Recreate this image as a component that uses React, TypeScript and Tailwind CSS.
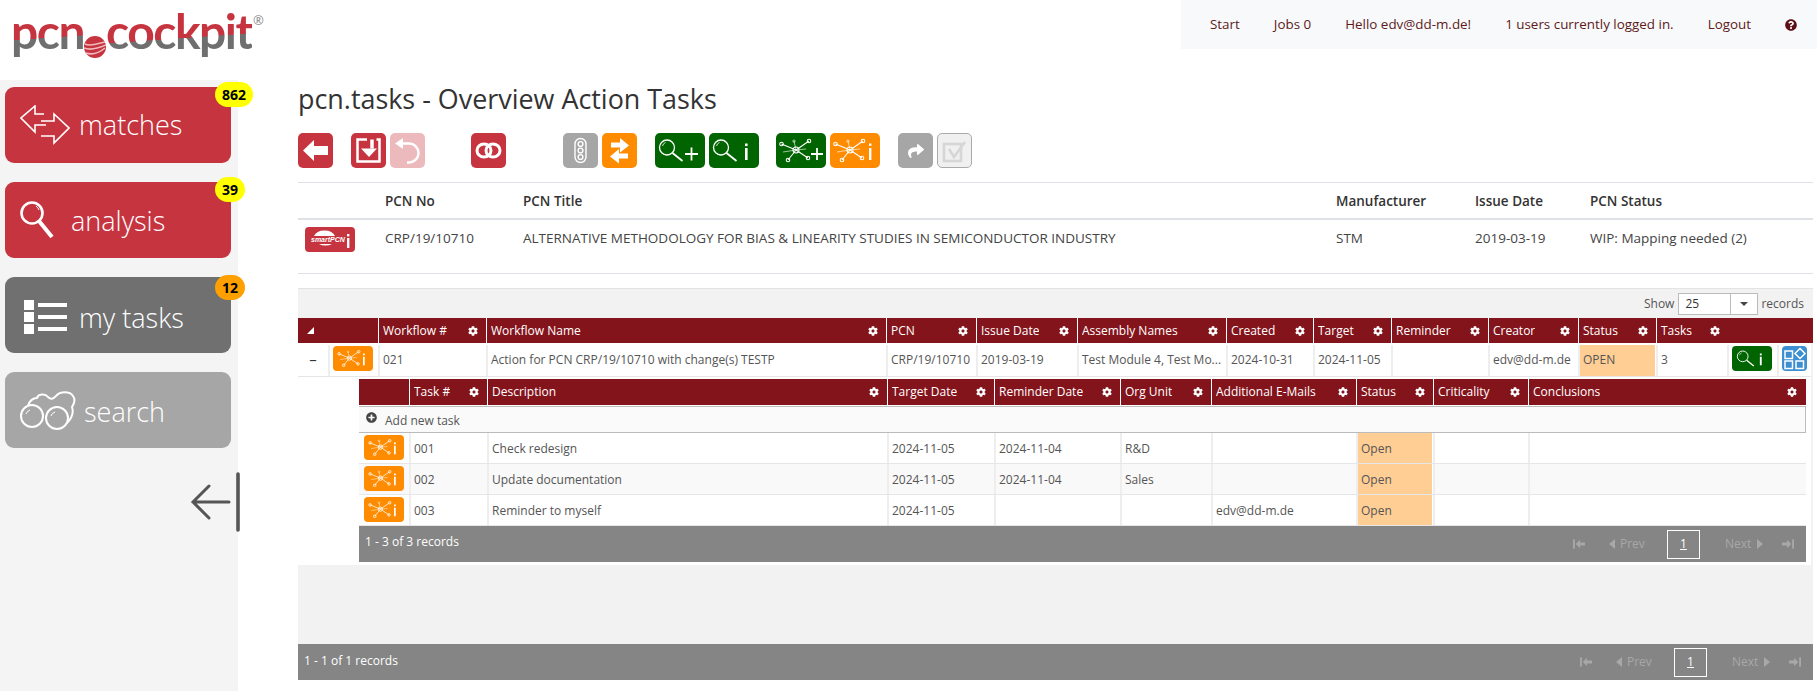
import type { ReactNode } from "react";
import { FaCog, FaPlusCircle, FaQuestionCircle, FaShare } from "react-icons/fa";

function Gear() {
  return <FaCog className="ml-auto shrink-0 text-white" size={10} />;
}

function HubIcon({ mark }: { mark: "i" | "+" }) {
  const nodes = [
    [5.5, 11],
    [33, 8],
    [12, 27],
    [32, 25],
  ];
  return (
    <svg viewBox="0 0 50 35" className="h-full w-full" fill="none" stroke="#fff">
      <g strokeWidth="1.05">
        <line x1="20" y1="17" x2="5.5" y2="11" />
        <line x1="20" y1="17" x2="33" y2="8" />
        <line x1="20" y1="17" x2="12" y2="27" />
        <line x1="20" y1="17" x2="32" y2="25" />
        <line x1="20" y1="17" x2="18" y2="8" strokeOpacity=".6" />
        <line x1="20" y1="17" x2="7" y2="19" strokeOpacity=".6" />
        <line x1="20" y1="17" x2="30" y2="16" strokeOpacity=".6" />
        <circle cx="20" cy="17" r="3" fill="none" />
        {nodes.map(([x, y]) => (
          <circle key={x} cx={x} cy={y} r="1.8" />
        ))}
        <circle cx="18" cy="8" r="1.1" strokeOpacity=".6" />
      </g>
      {mark === "+" ? (
        <path d="M35 21h12M41 15v12" strokeWidth="1.8" />
      ) : (
        <>
          <rect x="39" y="15" width="2.4" height="12" fill="#fff" stroke="none" />
          <rect x="39" y="10.5" width="2.4" height="2.4" fill="#fff" stroke="none" />
        </>
      )}
    </svg>
  );
}

function LensIcon({ mark }: { mark: "i" | "+" }) {
  return (
    <svg viewBox="0 0 50 35" className="h-full w-full" fill="none" stroke="#fff">
      <circle cx="12" cy="14.5" r="7.5" strokeWidth="1.3" />
      <path d="M17.5 20l10 8" strokeWidth="1.8" />
      <path d="M7.5 13a5 5 0 0 1 3-3.5" strokeWidth="0.8" />
      {mark === "+" ? (
        <path d="M30 21h13M36.5 14.5v13" strokeWidth="1.8" />
      ) : (
        <>
          <rect x="36" y="15" width="2.6" height="12" fill="#fff" stroke="none" />
          <rect x="36" y="10.5" width="2.6" height="2.6" fill="#fff" stroke="none" />
        </>
      )}
    </svg>
  );
}

function ToolButton({
  children,
  className,
}: {
  children: ReactNode;
  className: string;
}) {
  return (
    <div
      className={`flex h-[35px] shrink-0 items-center justify-center rounded-[5px] ${className}`}
    >
      {children}
    </div>
  );
}

function Toolbar() {
  return (
    <div className="flex h-[35px]">
      <ToolButton className="w-[35px] bg-[#c6343f]">
        <svg viewBox="0 0 35 35" className="h-full w-full" fill="#fff">
          <path d="M5 17.5L16 7v6h14v9H16v6z" />
        </svg>
      </ToolButton>
      <ToolButton className="ml-[18px] w-[35px] bg-[#c6343f]">
        <svg viewBox="0 0 35 35" className="h-full w-full" fill="none" stroke="#fff">
          <path d="M16 6.5H6.5v22h22v-22h-3" strokeWidth="2.5" />
          <path d="M21 6.5v9" strokeWidth="3.5" />
          <path d="M13 14.5h16l-8 8.5z" transform="translate(-3 1) scale(1 1)" fill="#fff" stroke="none" />
        </svg>
      </ToolButton>
      <ToolButton className="ml-[4px] w-[35px] bg-[#ecb9bd]">
        <svg viewBox="0 0 35 35" className="h-full w-full" fill="none" stroke="#fff">
          <path d="M10 10.5h9a9.5 9.5 0 0 1 0 19h-2" strokeWidth="2.4" />
          <path d="M5 10.5l8-5.5v11z" fill="#fff" stroke="none" />
        </svg>
      </ToolButton>
      <ToolButton className="ml-[46px] w-[35px] bg-[#c6343f]">
        <svg viewBox="0 0 35 35" className="h-full w-full" fill="none" stroke="#fff" strokeWidth="3">
          <ellipse cx="13" cy="17.5" rx="7" ry="6.5" />
          <ellipse cx="22" cy="17.5" rx="7" ry="6.5" />
        </svg>
      </ToolButton>
      <ToolButton className="ml-[57px] w-[35px] bg-[#a6a6a6]">
        <svg viewBox="0 0 35 35" className="h-full w-full" fill="none" stroke="#fff" strokeWidth="1.4">
          <rect x="12" y="5.5" width="11" height="24" rx="5.5" />
          <circle cx="17.5" cy="11" r="2.4" />
          <circle cx="17.5" cy="17.5" r="2.4" />
          <circle cx="17.5" cy="24" r="2.4" />
        </svg>
      </ToolButton>
      <ToolButton className="ml-[4px] w-[35px] bg-[#ff8c00]">
        <svg viewBox="0 0 35 35" className="h-full w-full" fill="#fff">
          <path d="M9 10.5h9V6l9 7.5-9 7v-5H9z" transform="translate(0 -1)" />
          <path d="M26 19.5h-9V15l-9 7.5 9 7v-5h9z" transform="translate(0 1)" />
        </svg>
      </ToolButton>
      <ToolButton className="ml-[18px] w-[50px] bg-[#006400]">
        <LensIcon mark="+" />
      </ToolButton>
      <ToolButton className="ml-[4px] w-[50px] bg-[#006400]">
        <LensIcon mark="i" />
      </ToolButton>
      <ToolButton className="ml-[17px] w-[50px] bg-[#006400]">
        <HubIcon mark="+" />
      </ToolButton>
      <ToolButton className="ml-[4px] w-[50px] bg-[#ff8c00]">
        <HubIcon mark="i" />
      </ToolButton>
      <ToolButton className="ml-[18px] w-[35px] bg-[#a6a6a6]">
        <FaShare size={16} className="text-white" />
      </ToolButton>
      <ToolButton className="ml-[4px] w-[35px] border border-[#aaaaaa] bg-[#f0f0f0]">
        <svg viewBox="0 0 33 33" className="h-full w-full" fill="none" stroke="#d6d6d6" strokeWidth="2.6">
          <rect x="6" y="10" width="17" height="17" />
          <path d="M11 15l5 8 11-15" />
        </svg>
      </ToolButton>
    </div>
  );
}

function SmartPcnButton() {
  return (
    <div className="flex h-[25px] w-[50px] items-center rounded-[4px] bg-[#c6343f]">
      <svg viewBox="0 0 50 25" className="h-full w-full">
        <path d="M9 9a11 8 0 0 1 21 0z" fill="#fff" />
        <path d="M14 17a9 5 0 0 0 13 0z" fill="#fff" />
        <text x="6" y="15" fill="#fff" fontSize="7" fontWeight="700" fontStyle="italic" fontFamily="'Liberation Sans', sans-serif">
          smartPCN
        </text>
        <rect x="42" y="11" width="2.4" height="10" fill="#fff" />
        <rect x="42" y="7" width="2.4" height="2.4" fill="#fff" />
      </svg>
    </div>
  );
}

function PcnSummary() {
  return (
    <div className="mt-[14px] border-b border-t border-[#dee2e6] text-[13.5px] text-[#444]">
      <div className="grid h-[37px] grid-cols-[87px_138px_813px_139px_115px_1fr] items-center border-b-2 border-[#dee2e6] pt-[2px] font-semibold text-[#333]">
        <span />
        <span>PCN No</span>
        <span>PCN Title</span>
        <span>Manufacturer</span>
        <span>Issue Date</span>
        <span>PCN Status</span>
      </div>
      <div className="grid h-[53px] grid-cols-[87px_138px_813px_139px_115px_1fr] items-start pt-[7px]">
        <div className="pl-[7px]">
          <SmartPcnButton />
        </div>
        <span className="pt-[1px]">CRP/19/10710</span>
        <span className="pt-[1px]">ALTERNATIVE METHODOLOGY FOR BIAS &amp; LINEARITY STUDIES IN SEMICONDUCTOR INDUSTRY</span>
        <span className="pt-[1px]">STM</span>
        <span className="pt-[1px]">2019-03-19</span>
        <span className="pt-[1px]">WIP: Mapping needed (2)</span>
      </div>
    </div>
  );
}

const outerHeads = [
  "Workflow #",
  "Workflow Name",
  "PCN",
  "Issue Date",
  "Assembly Names",
  "Created",
  "Target",
  "Reminder",
  "Creator",
  "Status",
  "Tasks",
];

const innerHeads = [
  "Task #",
  "Description",
  "Target Date",
  "Reminder Date",
  "Org Unit",
  "Additional E-Mails",
  "Status",
  "Criticality",
  "Conclusions",
];

const tasks = [
  ["001", "Check redesign", "2024-11-05", "2024-11-04", "R&D", ""],
  ["002", "Update documentation", "2024-11-05", "2024-11-04", "Sales", ""],
  ["003", "Reminder to myself", "2024-11-05", "", "", "edv@dd-m.de"],
];

function PagerGlyph({ dir }: { dir: "first" | "last" }) {
  return (
    <svg viewBox="0 0 13 12" className={`h-[12px] w-[12px] ${dir === "last" ? "rotate-180" : ""}`} fill="#a8a8a8">
      <rect x="0" y="1" width="2" height="10" />
      <path d="M3 6l4.5-4.5v3H13v3H7.5v3z" />
    </svg>
  );
}

function Pager({ label, inner }: { label: string; inner?: boolean }) {
  return (
    <div className="flex h-[36px] items-center bg-[#858585] pl-[6px] pr-[12px] text-[12px]">
      <span className={`text-white ${inner ? "pb-[5px]" : "pb-[2px]"}`}>{label}</span>
      <div className="ml-auto flex items-center text-[#a8a8a8]">
        <PagerGlyph dir="first" />
        <span className="ml-[24px] h-0 w-0 border-y-[5px] border-r-[6px] border-y-transparent border-r-[#a8a8a8]" />
        <span className="ml-[5px] w-[27px]">Prev</span>
        <span className="ml-[20px] flex h-[29px] w-[33px] items-center justify-center border border-white text-white underline">
          1
        </span>
        <span className="ml-[25px] w-[27px]">Next</span>
        <span className="ml-[5px] h-0 w-0 border-y-[5px] border-l-[6px] border-y-transparent border-l-[#a8a8a8]" />
        <span className="ml-[19px]">
          <PagerGlyph dir="last" />
        </span>
      </div>
    </div>
  );
}

function TasksTable() {
  const cols = "grid grid-cols-[50px_78px_400px_107px_126px_91px_145px_77px_95px_277px]";
  return (
    <div className="ml-[61px] mr-[5px] pt-[2px]">
      <div className={`${cols} h-[26px] items-center bg-[#84141c] text-[12px] text-white`}>
        <span />
        {innerHeads.map((h) => (
          <div key={h} className="flex h-full items-center border-l border-white pl-[4px] pr-[8px]">
            <span className="truncate">{h}</span>
            <Gear />
          </div>
        ))}
      </div>
      <div className="mt-[1px] flex h-[27px] items-center border-x border-y border-[#bbbbbb] border-l-0 bg-[#fafafa] pl-[7px] text-[12px] text-[#555]">
        <FaPlusCircle size={11} className="mb-[4px] text-[#444]" />
        <span className="ml-[8px] pt-[2px]">Add new task</span>
      </div>
      {tasks.map((t, i) => (
        <div
          key={t[0]}
          className={`${cols} h-[31px] border-b border-[#e6e6e6] text-[12px] text-[#555] ${
            i === 1 ? "bg-[#f9f9f9]" : "bg-white"
          }`}
        >
          <div className="pl-[5px] pt-[2px]">
            <div className="h-[25px] w-[40px] rounded-[4px] bg-[#ff8c00]">
              <HubIcon mark="i" />
            </div>
          </div>
          {[t[0], t[1], t[2], t[3], t[4], t[5]].map((v, j) => (
            <div key={j} className="flex items-center border-l-2 border-[#eeeeee] pl-[3px] pt-[2px]">
              {v}
            </div>
          ))}
          <div className="flex items-center border-l-2 border-r border-[#eeeeee] border-r-white bg-[#ffce94] pl-[3px] pt-[2px]">
            Open
          </div>
          <div className="border-l-2 border-[#eeeeee]" />
          <div className="border-l-2 border-[#eeeeee]" />
        </div>
      ))}
      <Pager label="1 - 3 of 3 records" inner />
    </div>
  );
}

function WorkflowGrid() {
  const cols = "grid grid-cols-[30px_50px_108px_400px_90px_101px_149px_87px_78px_97px_90px_78px_71px_50px_34px]";
  const cell = "flex items-center border-l-2 border-[#eeeeee] pb-[2px] pl-[3px]";
  return (
    <div className="mt-[14px] border-t border-[#e3e3e3] bg-[#f2f2f2]">
      <div className="flex h-[29px] items-center justify-end pr-[9px] text-[12px] text-[#555]">
        <span>Show</span>
        <div className="ml-[4px] flex h-[22px] w-[80px] items-center border border-[#bbbbbb] bg-white">
          <span className="flex-1 pl-[6px] text-[#333]">25</span>
          <span className="flex h-full w-[27px] items-center justify-center border-l border-[#bbbbbb]">
            <span className="h-0 w-0 border-x-[4px] border-t-[4px] border-x-transparent border-t-[#444]" />
          </span>
        </div>
        <span className="ml-[3px]">records</span>
      </div>
      <div className={`${cols} h-[25px] items-center bg-[#84141c] text-[12px] text-white`}>
        <div className="col-span-2 flex h-full items-center pl-[9px]">
          <svg viewBox="0 0 8 8" className="h-[7px] w-[7px]" fill="#fff">
            <path d="M8 0v8H0z" />
          </svg>
        </div>
        {outerHeads.slice(0, 10).map((h) => (
          <div key={h} className="flex h-full items-center border-l border-white pl-[4px] pr-[8px]">
            <span className="truncate">{h}</span>
            <Gear />
          </div>
        ))}
        <div className="flex h-full items-center border-l border-white pl-[4px] pr-[7px]">
          <span>Tasks</span>
          <Gear />
        </div>
        <span />
        <span />
      </div>
      <div className="mr-[2px] bg-white pb-[3px]">
        <div className={`${cols} h-[34px] border-b border-[#e6e6e6] pt-[2px] text-[12px] text-[#555]`}>
          <div className="flex items-center justify-center pb-[2px] text-[15px] text-[#333]">–</div>
          <div className="border-l-2 border-[#eeeeee] pl-[3px] pt-[1px]">
            <div className="h-[25px] w-[40px] rounded-[4px] bg-[#ff8c00]">
              <HubIcon mark="i" />
            </div>
          </div>
          <div className={cell}>021</div>
          <div className={cell}>Action for PCN CRP/19/10710 with change(s) TESTP</div>
          <div className={cell}>CRP/19/10710</div>
          <div className={cell}>2019-03-19</div>
          <div className={cell}>Test Module 4, Test Mo...</div>
          <div className={cell}>2024-10-31</div>
          <div className={cell}>2024-11-05</div>
          <div className={cell} />
          <div className={cell}>edv@dd-m.de</div>
          <div className={`${cell} border-r border-r-white bg-[#ffce94]`}>OPEN</div>
          <div className={cell}>3</div>
          <div className="border-l-2 border-[#eeeeee] pl-[3px] pt-[1px]">
            <div className="h-[25px] w-[40px] rounded-[4px] bg-[#006400]">
              <LensIcon mark="i" />
            </div>
          </div>
          <div className="border-l-2 border-[#eeeeee] pl-[3px] pt-[1px]">
            <div className="h-[25px] w-[25px] rounded-[4px] bg-[#3d8fd1]">
              <svg viewBox="0 0 25 25" className="h-full w-full" fill="none" stroke="#fff" strokeWidth="1.5">
                <rect x="3" y="5" width="7.5" height="7.5" />
                <path d="M18 2.5l5 5-5 5-5-5z" />
                <rect x="3" y="15" width="7.5" height="7.5" />
                <rect x="14" y="15" width="7.5" height="7.5" />
              </svg>
            </div>
          </div>
        </div>
        <TasksTable />
      </div>
      <div className="h-[79px]" />
      <Pager label="1 - 1 of 1 records" />
    </div>
  );
}

function NavButton({
  label,
  bg,
  icon,
  badge,
  badgeClass,
  textClass,
}: {
  label: string;
  bg: string;
  icon: ReactNode;
  badge?: string;
  badgeClass?: string;
  textClass: string;
}) {
  return (
    <div className={`relative flex h-[76px] w-[226px] items-center rounded-[9px] ${bg}`}>
      {icon}
      <span className={`text-[27px] font-light text-white ${textClass}`}>{label}</span>
      {badge && (
        <span
          className={`absolute left-[210px] flex h-[25px] items-center justify-center rounded-full px-[7px] text-[14px] font-bold text-black ${badgeClass}`}
        >
          {badge}
        </span>
      )}
    </div>
  );
}

function Sidebar() {
  return (
    <aside className="flex w-[238px] shrink-0 flex-col gap-[19px] bg-[#f4f4f4] pl-[5px] pt-[7px]">
      <NavButton
        label="matches"
        bg="bg-[#c6343f]"
        badge="862"
        badgeClass="top-[-5px] bg-[#ffff00]"
        textClass="ml-[9px] mt-[1px]"
        icon={
          <svg viewBox="0 0 50 40" className="ml-[15px] h-[40px] w-[50px]" fill="none" stroke="#fff" strokeWidth="1.6">
            <path d="M24 9h-9V1L1 13l14 14v-7h11" />
            <path d="M21 16h13V9l15 14-15 15v-7H21" />
          </svg>
        }
      />
      <NavButton
        label="analysis"
        bg="bg-[#c6343f]"
        badge="39"
        badgeClass="top-[-5px] bg-[#ffff00]"
        textClass="ml-[17px] mt-[2px]"
        icon={
          <svg viewBox="0 0 34 40" className="ml-[15px] h-[40px] w-[34px]" fill="none" stroke="#fff">
            <circle cx="12" cy="13" r="10.5" strokeWidth="2.6" />
            <path d="M19 21l13 16" strokeWidth="4" />
            <path d="M16 6a8 8 0 0 1 3 4" strokeWidth="1" />
          </svg>
        }
      />
      <NavButton
        label="my tasks"
        bg="bg-[#707070]"
        badge="12"
        badgeClass="top-[-2px] bg-[#ffa000]"
        textClass="ml-[12px] mt-[7px]"
        icon={
          <svg viewBox="0 0 43 34" className="ml-[19px] mt-[3px] h-[34px] w-[43px]" fill="#fff">
            <rect x="0" y="0" width="10" height="10" />
            <rect x="0" y="12" width="10" height="10" />
            <rect x="0" y="24" width="10" height="10" />
            <rect x="14" y="3" width="29" height="4" />
            <rect x="14" y="15" width="29" height="4" />
            <rect x="14" y="27" width="29" height="4" />
          </svg>
        }
      />
      <NavButton
        label="search"
        bg="bg-[#a6a6a6]"
        textClass="ml-[8px] mt-[4px]"
        icon={
          <svg viewBox="0 0 56 40" className="ml-[15px] mt-[2px] h-[40px] w-[56px]" fill="none" stroke="#fff" strokeWidth="2">
            <circle cx="12" cy="25" r="11" />
            <circle cx="37" cy="27" r="11" />
            <path d="M8 15c1-5 5-8 9-8 1-4 8-5 11-1 3 3 5 2 8-1 4-5 14-5 17 0 3 4 1 8-1 11 2 6-1 12-5 16" />
            <path d="M6 23a6 6 0 0 1 4-4M31 25a6 6 0 0 1 4-4" strokeWidth="1" />
          </svg>
        }
      />
      <div className="-mr-[2px] mt-[5px] flex justify-end">
        <svg viewBox="0 0 50 60" className="h-[60px] w-[50px]" fill="none" stroke="#555" strokeLinecap="round" strokeWidth="3">
          <path d="M39 30H3M19 14L3 30l16 16" />
          <path d="M48 2v56" strokeWidth="3.6" />
        </svg>
      </div>
    </aside>
  );
}

function Logo() {
  return (
    <div className="flex w-[238px] items-start pl-[11px] pt-[1px]">
      <span className="bg-[linear-gradient(176deg,#c6343f_60%,#6f6f6f_61%)] bg-clip-text font-['Lato',sans-serif] text-[48px] font-bold leading-[60px] tracking-[-1.5px] text-transparent">
        pcn
      </span>
      <svg viewBox="0 0 22 22" className="mt-[35px] h-[22px] w-[22px] shrink-0">
        <circle cx="11" cy="11" r="11" fill="#c6343f" />
        <path d="M1 8c6 3 14-1 20-2M0 12c7 3 15 0 22-3M2 17c6 2 13 0 19-5" stroke="#f1b9bd" fill="none" strokeWidth="1.6" />
      </svg>
      <span className="bg-[linear-gradient(176deg,#c6343f_60%,#6f6f6f_61%)] bg-clip-text font-['Lato',sans-serif] text-[48px] font-bold leading-[60px] tracking-[-1.5px] text-transparent">
        cockpit
      </span>
      <span className="ml-[1px] mt-[13px] text-[13px] leading-none text-[#888]">®</span>
    </div>
  );
}

function TopNav() {
  return (
    <nav className="ml-auto flex h-[49px] w-[636px] items-center bg-[#f8f9fa] pl-[29px] text-[13.4px] text-[#5c1a1a]">
      <span>Start</span>
      <span className="ml-[34px]">Jobs 0</span>
      <span className="ml-[34px]">Hello edv@dd-m.de!</span>
      <span className="ml-[34px]">1 users currently logged in.</span>
      <span className="ml-[34px]">Logout</span>
      <FaQuestionCircle size={12} className="ml-[34px] text-[#5c0f14]" />
    </nav>
  );
}

export default function App() {
  return (
    <div className="h-[691px] overflow-hidden bg-white font-['Open_Sans',sans-serif]">
      <header className="flex h-[80px] items-start">
        <Logo />
        <TopNav />
      </header>
      <div className="flex h-[611px]">
        <Sidebar />
        <main className="flex-1 pl-[60px] pr-[5px]">
          <h1 className="h-[53px] text-[26.9px] leading-[38px] text-[#333]">pcn.tasks - Overview Action Tasks</h1>
          <Toolbar />
          <PcnSummary />
          <WorkflowGrid />
        </main>
      </div>
    </div>
  );
}
